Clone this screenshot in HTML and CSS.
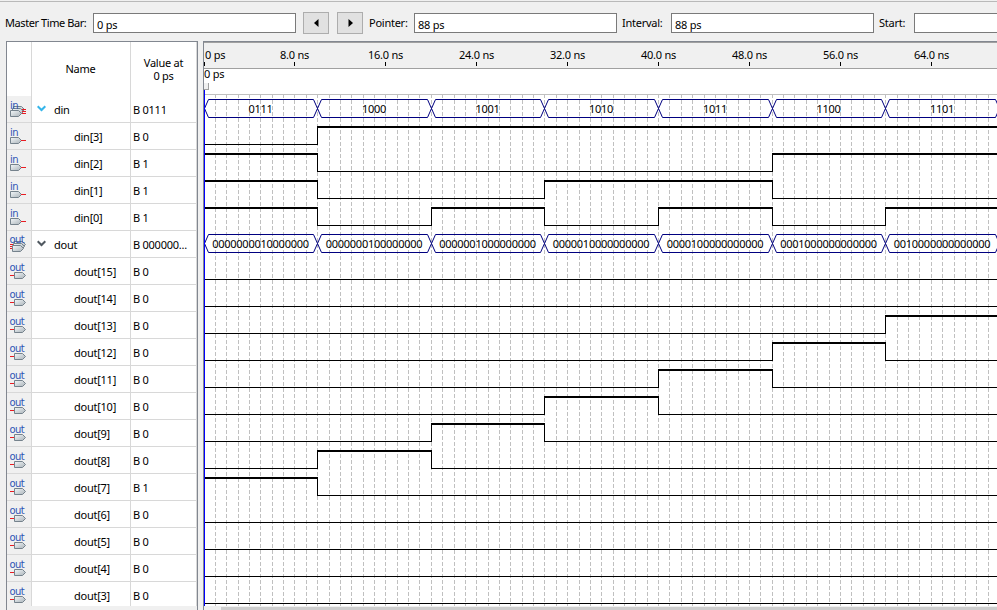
FILE: index.html
```
<!DOCTYPE html>
<html lang="en">
<head>
    <meta charset="UTF-8">
    <title>Simulation Waveform Editor</title>
    <link rel="stylesheet" href="styles.css">
</head>
<body>
    <svg class="defs">
        <defs>
            <linearGradient id="metal" x1="0" y1="0" x2="1" y2="1">
                <stop offset="0" stop-color="#f4f8fa"/>
                <stop offset="1" stop-color="#a9b2b8"/>
            </linearGradient>
            <symbol id="pin" viewBox="0 0 12 7">
                <path d="M.5 .5H8.5L11.5 3.5L8.5 6.5H.5Z" fill="url(#metal)" stroke="#75828c"/>
            </symbol>
            <symbol id="icon-in" viewBox="0 0 18 20">
                <text x="1" y="10" class="iconText">in</text>
                <use href="#pin" x="1" y="11" width="12" height="7"/>
                <path d="M12 14.5h5" stroke="#e81c23"/>
            </symbol>
            <symbol id="icon-in-bus" viewBox="0 0 18 20">
                <use href="#pin" x="4" y="7" width="12" height="7"/>
                <use href="#pin" x="3" y="9" width="12" height="7"/>
                <use href="#pin" x="1" y="11" width="12" height="7"/>
                <path d="M13 10.5h4M13 12.5h4M13 14.5h4" stroke="#e81c23"/>
                <text x="1" y="10" class="iconText">in</text>
            </symbol>
            <symbol id="icon-out" viewBox="0 0 18 20">
                <text x="0.5" y="10" class="iconText">out</text>
                <path d="M1 14.5h4" stroke="#e81c23"/>
                <use href="#pin" x="5" y="11" width="12" height="7"/>
            </symbol>
            <symbol id="icon-out-bus" viewBox="0 0 18 20">
                <path d="M1 10.5h4M1 12.5h4M1 14.5h4" stroke="#e81c23"/>
                <use href="#pin" x="5" y="7" width="12" height="7"/>
                <use href="#pin" x="4" y="9" width="12" height="7"/>
                <use href="#pin" x="3" y="11" width="12" height="7"/>
                <text x="0.5" y="9" class="iconText">out</text>
            </symbol>
        </defs>
    </svg>

    <div class="toolbar">
        <label class="timeLabel">Master Time Bar:</label>
        <div class="field">0 ps</div>
        <button class="step prev"><svg width="5" height="8"><path d="M4.5 0V8L0 4Z"/></svg></button>
        <button class="step next"><svg width="5" height="8"><path d="M.5 0V8L5 4Z"/></svg></button>
        <label>Pointer:</label>
        <div class="field pointerField">88 ps</div>
        <label>Interval:</label>
        <div class="field intervalField">88 ps</div>
        <label>Start:</label>
        <div class="field startField"></div>
    </div>

    <div class="panels">
        <div class="signals">
            <div class="row head">
                <div class="icon"></div>
                <div class="name">Name</div>
                <div class="value">Value at<br>0 ps</div>
            </div>
            <div id="signalRows"></div>
        </div>
        <div class="waves">
            <div class="ruler" id="ruler"></div>
            <div class="barLabel">0 ps</div>
            <svg id="waveArea" class="waveArea" width="793" height="512"></svg>
            <div class="marker"></div>
            <div class="masterBar"></div>
            <div class="scrollbar"><div class="thumb"></div></div>
        </div>
    </div>

    <script src="waves.js"></script>
</body>
</html>
```
FILE: waves.js
```
const NS = 11.364;      // pixels per nanosecond
const ROW = 27;
const RIGHT = 793;

// one entry per 10 ns
const signals = [
    { name: 'din', value: 'B 0111', icon: 'in-bus', bus: ['0111', '1000', '1001', '1010', '1011', '1100', '1101'] },
    { name: 'din[3]', value: 'B 0', icon: 'in', bits: '0111111' },
    { name: 'din[2]', value: 'B 1', icon: 'in', bits: '1000011' },
    { name: 'din[1]', value: 'B 1', icon: 'in', bits: '1001100' },
    { name: 'din[0]', value: 'B 1', icon: 'in', bits: '1010101' },
    { name: 'dout', value: 'B 000000...', icon: 'out-bus', bus: [7, 8, 9, 10, 11, 12, 13].map(n => (1 << n).toString(2).padStart(16, '0')) }
];
for(let n = 15; n >= 3; n--) {
    let bits = [7, 8, 9, 10, 11, 12, 13].map(b => b === n ? '1' : '0').join('');
    signals.push({ name: `dout[${n}]`, value: 'B ' + bits[0], icon: 'out', bits: bits });
}

function xAt(ns) {
    return Math.round(203.5 + ns * NS) - 204;
}

function drawRows() {
    document.getElementById('signalRows').innerHTML = signals.map(s => {
        const arrow = s.bus ? `<svg class="arrow ${s.name}" width="9" height="7"><path d="M.7 1.2L4.5 5L8.3 1.2"/></svg>` : '';
        return `<div class="row">
            <div class="icon"><svg width="18" height="20"><use href="#icon-${s.icon}"/></svg></div>
            <div class="name ${s.bus ? 'group' : 'bit'}">${arrow}<span>${s.name}</span></div>
            <div class="value">${s.value}</div>
        </div>`;
    }).join('');
}

function drawRuler() {
    let html = '';
    for(let t = 0; t <= 64; t += 8) {
        html += `<div class="tick" style="left:${Math.max(xAt(t), 0)}px"><span>${t ? t + '.0 ns' : '0 ps'}</span></div>`;
    }
    document.getElementById('ruler').innerHTML = html;
}

function drawBus(values, top) {
    const y1 = top + 3.5, y2 = top + 21.5, mid = top + 12.5;
    return values.map((v, i) => {
        const a = Math.max(xAt(i * 10), 0) + 0.5, b = xAt((i + 1) * 10) + 0.5;
        return `<path class="bus" d="M${a} ${mid}L${a + 4} ${y1}H${b - 4}L${b} ${mid}L${b - 4} ${y2}H${a + 4}Z"/>
            <text x="${(a + b) / 2 - 0.5}" y="${top + 17}">${v}</text>`;
    }).join('');
}

function drawBits(bits, top) {
    let html = '';
    for(let i = 0; i < bits.length; i++) {
        const a = Math.max(xAt(i * 10), 0), b = Math.min(xAt((i + 1) * 10), RIGHT - 1);
        const high = bits[i] === '1';
        html += `<rect x="${a}" y="${top + (high ? 3 : 21)}" width="${b - a + 1}" height="${high ? 2 : 1}"/>`;
        if(i > 0 && bits[i] !== bits[i - 1]) {
            html += `<rect x="${a}" y="${top + 3}" width="1" height="19"/>`;
        }
    }
    return html;
}

function drawWaves() {
    let html = '';
    for(let t = 1; t < 70; t++) {
        html += `<path class="grid" d="M${xAt(t) + 0.5} 0V512"/>`;
    }
    signals.forEach((s, i) => {
        const top = i * ROW + 1;
        html += s.bus ? drawBus(s.bus, top) : drawBits(s.bits, top);
    });
    document.getElementById('waveArea').innerHTML = html;
}

drawRows();
drawRuler();
drawWaves();
```
FILE: styles.css
```
* { box-sizing: border-box; }

body {
  margin: 0;
  width: 997px;
  height: 610px;
  overflow: hidden;
  background: #f0f0f0;
  color: #000000;
  font: 11px/13px "Noto Sans", sans-serif;
  letter-spacing: -0.25px;
}

.defs {
  position: absolute;
  width: 0;
  height: 0;
}

/* Toolbar */
.toolbar {
  display: flex;
  align-items: center;
  height: 40px;
  margin-top: 1px;
  padding: 3px 0 0 5px;
  border-top: 1px solid #b9b9b9;
  white-space: nowrap;
}

.toolbar label {
  flex: none;
  width: 88px;
  padding-bottom: 1px;
}

.toolbar .timeLabel { letter-spacing: -0.42px; }

.field {
  flex: none;
  width: 203px;
  height: 20px;
  padding: 4px 3px 0;
  border: 1px solid #7a7a7a;
  background: #ffffff;
}

.startField {
  flex: 1;
  width: auto;
  border-right: 0;
}

.step {
  flex: none;
  display: flex;
  align-items: center;
  justify-content: center;
  width: 26px;
  height: 22px;
  margin: 0 0 0 7px;
  padding: 0 0 1px;
  border: 1px solid #adadad;
  background: #e1e1e1;
}

.step.next { margin: 0 6px 0 8px; }

.toolbar .step + label { width: 45px; }
.toolbar .pointerField + label { width: 49px; margin-left: 5px; }
.toolbar .intervalField + label { width: 35px; margin-left: 5px; }

/* Panels */
.panels {
  display: flex;
  height: 569px;
  padding-left: 6px;
}

.signals {
  flex: none;
  width: 192px;
  margin-right: 5px;
  border: solid #828790;
  border-width: 1px 1px 0;
}

#signalRows {
  height: 510px;
  overflow: hidden;
}

.row {
  display: flex;
  height: 27px;
}

.row > div {
  border-right: 1px solid #d8d8d8;
  border-bottom: 1px solid #d8d8d8;
  background: #ffffff;
}

.row > .icon {
  width: 25px;
  padding: 3px 0 0 2px;
  background: #f0f0f0;
}

.icon svg { display: block; }

.iconText {
  font: 10px "DejaVu Sans", sans-serif;
  letter-spacing: -0.6px;
  fill: #2f55b5;
}

.row .name {
  display: flex;
  align-items: center;
  width: 99px;
  padding-top: 1px;
}

.name.bit { padding-left: 42px; }
.name.group { padding-left: 5px; }

.row .value {
  flex: 1;
  padding: 7px 0 0 2px;
  white-space: nowrap;
}

.arrow {
  margin: -2px 8px 0 0;
  fill: none;
  stroke: #505860;
  stroke-width: 2;
}

.arrow.din { stroke: #35b5ea; }

.row.head { height: 54px; }

.row.head > div {
  justify-content: center;
  border-bottom: 0;
  background: #ffffff;
}

.row.head .name { padding: 0 1px 1px 0; }

.row.head .value {
  padding: 14px 0 0;
  text-align: center;
}

/* Waveforms */
.waves {
  position: relative;
  flex: 1;
  overflow: hidden;
  border: solid #828790;
  border-width: 1px 0 0 1px;
  background: #ffffff;
}

.ruler {
  position: relative;
  height: 27px;
  border-top: 1px solid #a0a0a0;
  border-bottom: 1px solid #a0a0a0;
  background: #f0f0f0;
}

.tick {
  position: absolute;
  top: 19px;
  width: 1px;
  height: 4px;
  background: #000000;
}

.tick span {
  position: absolute;
  bottom: 5px;
  left: -20px;
  width: 41px;
  text-align: center;
  white-space: nowrap;
}

.tick:first-child span {
  left: 1px;
  text-align: left;
}

.barLabel {
  height: 25px;
  line-height: 10px;
}

.waveArea {
  display: block;
  border-top: 1px solid #c0c0c0;
  shape-rendering: crispEdges;
}

.grid {
  stroke: #c0c0c0;
  stroke-dasharray: 4 2;
  stroke-dashoffset: 1;
}

.bus {
  fill: none;
  stroke: #000080;
  shape-rendering: auto;
}

.waveArea text { text-anchor: middle; }

.marker {
  position: absolute;
  top: 41px;
  left: 0;
  width: 5px;
  height: 7px;
  border: solid #a0a0a0;
  border-width: 0 1px 1px 0;
  background: #f0f0f0;
}

.masterBar {
  position: absolute;
  top: 48px;
  left: 0;
  width: 1px;
  height: 516px;
  background: #0000ff;
}

.scrollbar {
  position: absolute;
  left: 0;
  right: 0;
  bottom: 0;
  height: 4px;
  padding: 1px 0 0 17px;
  background: #f0f0f0;
}

.thumb {
  height: 3px;
  background: #cdcdcd;
}
```
